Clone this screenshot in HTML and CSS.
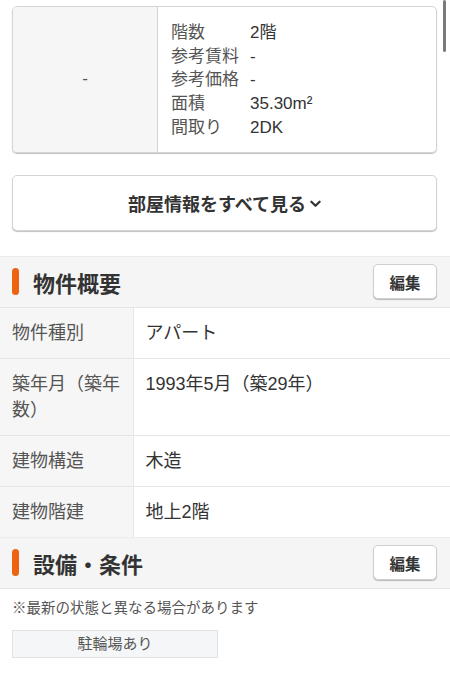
FILE: index.html
```html
<!DOCTYPE html>
<html lang="ja">
<head>
    <meta charset="UTF-8">
    <meta name="viewport" content="width=device-width, initial-scale=1.0">
    <title>物件詳細</title>
    <link rel="stylesheet" href="styles.css">
</head>
<body>
    <div class="scrollbar"></div>

    <div class="room-area">
        <div class="room-card">
            <div class="room-photo">-</div>
            <dl class="room-spec">
                <div class="spec-row"><dt>階数</dt><dd>2階</dd></div>
                <div class="spec-row"><dt>参考賃料</dt><dd>-</dd></div>
                <div class="spec-row"><dt>参考価格</dt><dd>-</dd></div>
                <div class="spec-row"><dt>面積</dt><dd>35.30m²</dd></div>
                <div class="spec-row"><dt>間取り</dt><dd>2DK</dd></div>
            </dl>
        </div>
        <button class="more-btn">部屋情報をすべて見る<svg class="chevron" viewBox="0 0 12 8" width="11" height="8"><path d="M1.5 1.5 L6 6 L10.5 1.5" fill="none" stroke="#333" stroke-width="2.4" stroke-linecap="round" stroke-linejoin="round"/></svg></button>
    </div>

    <section class="section">
        <div class="section-head">
            <h2>物件概要</h2>
            <button class="edit-btn">編集</button>
        </div>
        <table class="info-table">
            <tr><th>物件種別</th><td>アパート</td></tr>
            <tr><th>築年月（築年数）</th><td>1993年5月（築29年）</td></tr>
            <tr><th>建物構造</th><td>木造</td></tr>
            <tr><th>建物階建</th><td>地上2階</td></tr>
        </table>
    </section>

    <section class="section">
        <div class="section-head">
            <h2>設備・条件</h2>
            <button class="edit-btn">編集</button>
        </div>
        <p class="note">※最新の状態と異なる場合があります</p>
        <div class="tags">
            <span class="tag">駐輪場あり</span>
        </div>
    </section>
</body>
</html>
```

FILE: styles.css
```css
* {
    margin: 0;
    padding: 0;
    box-sizing: border-box;
}

body {
    font-family: "Liberation Sans", "Noto Sans CJK JP", sans-serif;
    background: #fff;
    color: #333;
    width: 450px;
}

.scrollbar {
    position: fixed;
    top: 0;
    right: 4px;
    width: 3px;
    height: 52px;
    border-radius: 2px;
    background: #7a7a7a;
}

.room-area {
    padding: 6px 13px 25px 12px;
}

.room-card {
    display: flex;
    border: 1px solid #d4d4d4;
    border-radius: 5px;
    box-shadow: 0 1px 1px rgba(0, 0, 0, 0.25);
    overflow: hidden;
}

.room-photo {
    width: 145px;
    flex-shrink: 0;
    background: #f6f6f6;
    border-right: 1px solid #d4d4d4;
    display: flex;
    justify-content: center;
    align-items: center;
    font-size: 17px;
    color: #555;
}

.room-spec {
    padding: 14px 0 12px 13px;
    font-size: 17px;
    line-height: 23.7px;
    color: #555;
}

.spec-row {
    display: flex;
}

.spec-row dt {
    width: 79px;
}

.spec-row dd {
    color: #333;
}

.more-btn {
    display: flex;
    justify-content: center;
    align-items: center;
    width: 100%;
    height: 56px;
    margin-top: 22px;
    background: #fff;
    border: 1px solid #d4d4d4;
    border-radius: 5px;
    box-shadow: 0 1px 1px rgba(0, 0, 0, 0.25);
    font-family: inherit;
    font-size: 18px;
    font-weight: bold;
    color: #333;
}

.chevron {
    margin-left: 4px;
    margin-top: 2px;
}

.section-head {
    display: flex;
    justify-content: space-between;
    align-items: center;
    height: 52px;
    padding: 0 13px 0 12px;
    background: #f5f5f5;
    border-top: 1px solid #ececec;
    border-bottom: 1px solid #e6e6e6;
}

.section-head h2 {
    display: flex;
    align-items: center;
    font-size: 22px;
    font-weight: bold;
    color: #333;
}

.section-head h2::before {
    content: "";
    width: 7px;
    height: 27px;
    margin-right: 14px;
    border-radius: 4px;
    background: #ec6410;
}

.edit-btn {
    width: 64px;
    height: 35px;
    background: #fff;
    border: 1px solid #cfcfcf;
    border-radius: 5px;
    box-shadow: 0 1px 1px rgba(0, 0, 0, 0.25);
    font-family: inherit;
    font-size: 15.5px;
    font-weight: bold;
    color: #333;
}

.info-table {
    width: 100%;
    border-collapse: collapse;
    font-size: 18px;
    line-height: 26px;
}

.info-table th,
.info-table td {
    padding: 12px;
    border-bottom: 1px solid #e6e6e6;
    text-align: left;
    vertical-align: top;
    font-weight: normal;
}

.info-table th {
    width: 133px;
    background: #f6f6f6;
    border-right: 1px solid #e6e6e6;
    color: #555;
}

.info-table td {
    color: #333;
}

.info-table tr:last-child th,
.info-table tr:last-child td {
    border-bottom: none;
}

.note {
    padding: 9px 12px 0;
    font-size: 14.5px;
    line-height: 20px;
    color: #555;
}

.tags {
    display: flex;
    padding: 12px 12px 20px;
}

.tag {
    width: 206px;
    height: 28px;
    line-height: 26px;
    text-align: center;
    background: #f4f6f7;
    border: 1px solid #e0e3e5;
    font-size: 15px;
    color: #555;
}
```
